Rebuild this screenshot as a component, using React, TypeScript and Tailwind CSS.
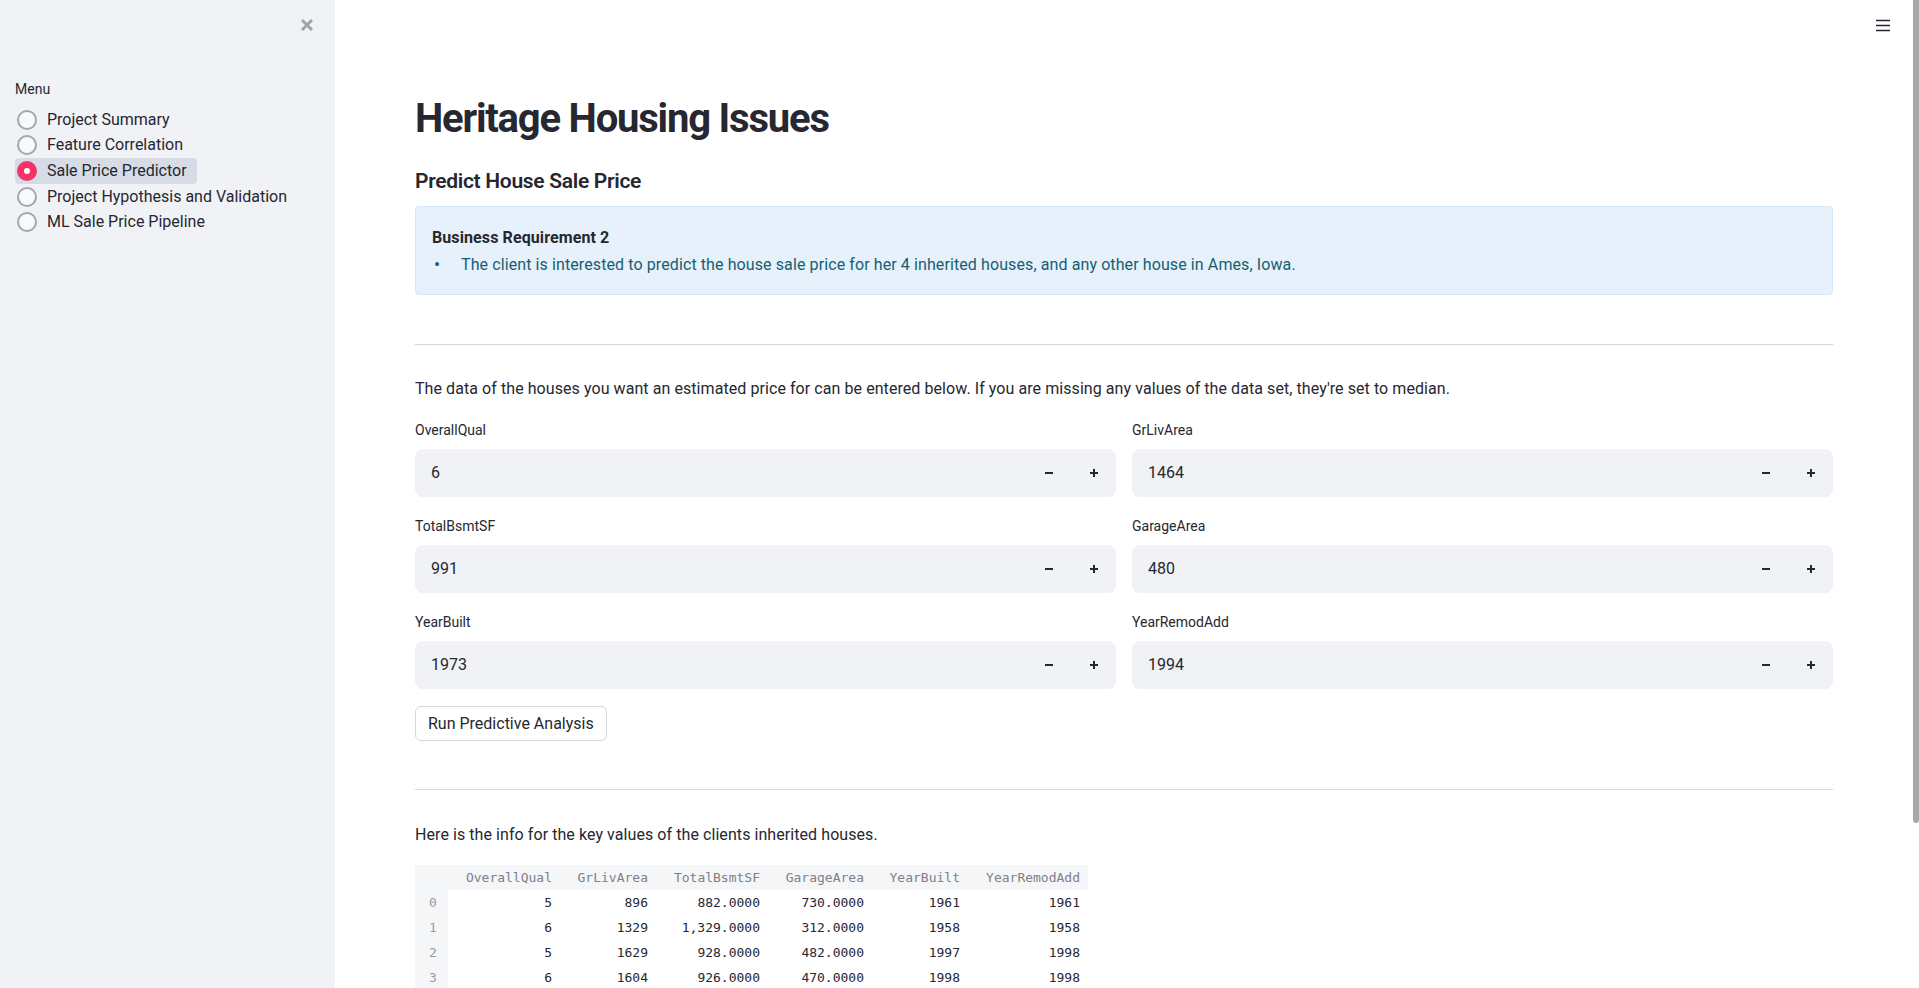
import { ReactNode } from "react";

const SANS = "font-['Roboto','Liberation_Sans',sans-serif]";
const MONO = "font-['DejaVu_Sans_Mono','Liberation_Mono',monospace]";

const menuItems = [
  "Project Summary",
  "Feature Correlation",
  "Sale Price Predictor",
  "Project Hypothesis and Validation",
  "ML Sale Price Pipeline",
];

const fields = [
  { label: "OverallQual", value: "6" },
  { label: "GrLivArea", value: "1464" },
  { label: "TotalBsmtSF", value: "991" },
  { label: "GarageArea", value: "480" },
  { label: "YearBuilt", value: "1973" },
  { label: "YearRemodAdd", value: "1994" },
];

const columns = ["OverallQual", "GrLivArea", "TotalBsmtSF", "GarageArea", "YearBuilt", "YearRemodAdd"];

const rows = [
  ["5", "896", "882.0000", "730.0000", "1961", "1961"],
  ["6", "1329", "1,329.0000", "312.0000", "1958", "1958"],
  ["5", "1629", "928.0000", "482.0000", "1997", "1998"],
  ["6", "1604", "926.0000", "470.0000", "1998", "1998"],
];

const Radio = ({ label, selected }: { label: string; selected?: boolean }) => (
  <div
    className={`flex h-[25.6px] w-fit items-center gap-[10px] rounded-[4px] pl-[2px] pr-[10px] ${
      selected ? "bg-[#d6dbe5]" : ""
    }`}
  >
    {selected ? (
      <span className="flex h-[20px] w-[20px] items-center justify-center rounded-full bg-[#f63366]">
        <span className="h-[6px] w-[6px] rounded-full bg-white" />
      </span>
    ) : (
      <span className="h-[20px] w-[20px] rounded-full border-2 border-[#a3a6ad] bg-[#f8f9fb]" />
    )}
    <span className="text-[16px] text-[#262730]">{label}</span>
  </div>
);

const Minus = () => (
  <svg width="10" height="10" viewBox="0 0 10 10">
    <path d="M1 5h8" stroke="#262730" strokeWidth="2" />
  </svg>
);

const Plus = () => (
  <svg width="10" height="10" viewBox="0 0 10 10">
    <path d="M1 5h8M5 1v8" stroke="#262730" strokeWidth="2" />
  </svg>
);

const NumberField = ({ label, value }: { label: string; value: string }) => (
  <div>
    <div className="h-[20px] text-[14px] leading-[20px] text-[#262730]">{label}</div>
    <div className="mt-[9px] flex h-[48px] items-center rounded-[8px] bg-[#f0f2f6]">
      <span className="flex-1 pl-[16px] text-[16px] text-[#262730]">{value}</span>
      <span className="flex h-full w-[45px] items-center justify-center">
        <Minus />
      </span>
      <span className="flex h-full w-[45px] items-center justify-center">
        <Plus />
      </span>
    </div>
  </div>
);

const Cell = ({ children, className = "" }: { children?: ReactNode; className?: string }) => (
  <div className={`flex h-[25px] items-center justify-end pr-2 ${className}`}>{children}</div>
);

export default function App() {
  return (
    <div className={`flex h-screen w-full overflow-hidden bg-white ${SANS}`}>
      {/* sidebar */}
      <aside className="relative w-[335px] shrink-0 bg-[#f0f2f6] pl-[15px]">
        <button className="absolute left-[300px] top-[18px]">
          <svg width="14" height="14" viewBox="0 0 14 14">
            <path d="M2 2l10 10M12 2L2 12" stroke="#a0a3aa" strokeWidth="3" />
          </svg>
        </button>
        <div className="pt-[79px] text-[14px] leading-[20px] text-[#262730]">Menu</div>
        <div className="mt-[8px] flex flex-col">
          {menuItems.map((m) => (
            <Radio key={m} label={m} selected={m === "Sale Price Predictor"} />
          ))}
        </div>
      </aside>

      {/* main */}
      <main className="relative flex-1 pl-[80px] pr-[86px] text-[#262730]">
        <svg className="absolute left-[1541px] top-[19px]" width="14" height="13" viewBox="0 0 14 13">
          <path d="M0 1.5h14M0 6.5h14M0 11.5h14" stroke="#262730" strokeWidth="1.6" />
        </svg>
        <div className="absolute right-0 top-0 h-[823px] w-[6px] rounded-b-[3px] bg-[#a8a8a8]" />

        <h1 className="pt-[93px] text-[40px] font-bold leading-[52px] tracking-[-1.2px] text-[#262730]">
          Heritage Housing Issues
        </h1>
        <h3 className="mt-[20px] text-[21px] font-semibold leading-[32px] tracking-[-0.3px]">Predict House Sale Price</h3>

        <div className="mt-[9px] h-[89px] rounded-[4px] border border-[#d3e5f7] bg-[#e7f1fb] px-4 pt-[19px] text-[16px] leading-[24px] tracking-[0.1px]">
          <div className="mb-[3px] font-bold text-[#262730]">Business Requirement 2</div>
          <div className="flex text-[#155f74]">
            <span className="w-[29px] pl-[2px] text-[18px]">•</span>
            <span>
              The client is interested to predict the house sale price for her 4 inherited houses, and any other house in
              Ames, Iowa.
            </span>
          </div>
        </div>

        <hr className="mt-[49px] border-0 border-t border-[#d6d6d9]" />

        <p className="mt-[32px] text-[16px] leading-[24px] tracking-[0.07px]">
          The data of the houses you want an estimated price for can be entered below. If you are missing any values of
          the data set, they're set to median.
        </p>

        <div className="mt-[19px] grid grid-cols-2 gap-x-4 gap-y-[19px]">
          {fields.map((f) => (
            <NumberField key={f.label} label={f.label} value={f.value} />
          ))}
        </div>

        <button className="mt-[17px] h-[35px] rounded-[6px] border border-[#d6d6d9] bg-white px-3 text-[16px] text-[#262730]">
          Run Predictive Analysis
        </button>

        <hr className="mt-[48px] border-0 border-t border-[#d6d6d9]" />

        <p className="mt-[33px] text-[16px] leading-[24px] tracking-[0.07px]">
          Here is the info for the key values of the clients inherited houses.
        </p>

        <div
          className={`mt-[18px] grid w-fit grid-cols-[33px_112px_96px_112px_104px_96px_120px] text-[13px] ${MONO}`}
        >
          <div className="h-[25px] bg-[#f5f6f8]" />
          {columns.map((c) => (
            <div key={c} className="flex h-[25px] items-center justify-end bg-[#f5f6f8] pr-2 text-[#7d808a]">
              {c}
            </div>
          ))}
          {rows.map((r, i) => (
            <>
              <div key={`i${i}`} className="flex h-[25px] items-center bg-[#f5f6f8] pl-[14px] text-[#9a9ca5]">
                {i}
              </div>
              {r.map((v, j) => (
                <Cell key={`${i}-${j}`} className="text-[#262730]">
                  {v}
                </Cell>
              ))}
            </>
          ))}
        </div>
      </main>
    </div>
  );
}
